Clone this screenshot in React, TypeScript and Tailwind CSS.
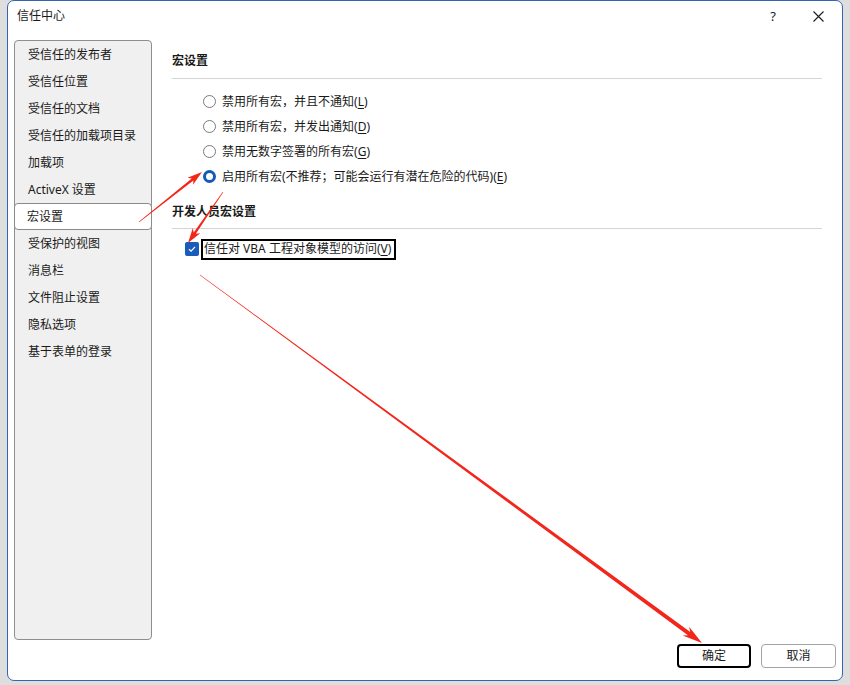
import React from "react";

const navItems = [
  "受信任的发布者",
  "受信任位置",
  "受信任的文档",
  "受信任的加载项目录",
  "加载项",
  "ActiveX 设置",
  "宏设置",
  "受保护的视图",
  "消息栏",
  "文件阻止设置",
  "隐私选项",
  "基于表单的登录",
];

const radios: { label: string; key: string; checked?: boolean }[] = [
  { label: "禁用所有宏，并且不通知", key: "L" },
  { label: "禁用所有宏，并发出通知", key: "D" },
  { label: "禁用无数字签署的所有宏", key: "G" },
  { label: "启用所有宏(不推荐；可能会运行有潜在危险的代码)", key: "E", checked: true },
];

type Pt = [number, number];

// tapered arrow: thin tail, thicker shaft near the head, triangular head
function arrowPoints(tail: Pt, tip: Pt, w0: number, w1: number, headLen: number, headW: number) {
  const dx = tip[0] - tail[0];
  const dy = tip[1] - tail[1];
  const len = Math.hypot(dx, dy);
  const ux = dx / len;
  const uy = dy / len;
  const nx = -uy;
  const ny = ux;
  const bx = tip[0] - ux * headLen;
  const by = tip[1] - uy * headLen;
  const cx = bx - ux * headLen * 0.25;
  const cy = by - uy * headLen * 0.25;
  const pts: Pt[] = [
    [tail[0] + (nx * w0) / 2, tail[1] + (ny * w0) / 2],
    [bx + (nx * w1) / 2, by + (ny * w1) / 2],
    [cx + (nx * headW) / 2, cy + (ny * headW) / 2],
    tip,
    [cx - (nx * headW) / 2, cy - (ny * headW) / 2],
    [bx - (nx * w1) / 2, by - (ny * w1) / 2],
    [tail[0] - (nx * w0) / 2, tail[1] - (ny * w0) / 2],
  ];
  return pts.map((p) => `${p[0].toFixed(1)},${p[1].toFixed(1)}`).join(" ");
}

function Radio({ checked }: { checked?: boolean }) {
  if (checked) {
    return (
      <span className="w-[13px] h-[13px] rounded-full border-[3.5px] border-[#1559b8] bg-white shrink-0" />
    );
  }
  return <span className="w-[13px] h-[13px] rounded-full border border-[#7a7a7a] bg-white shrink-0" />;
}

export default function App() {
  return (
    <div
      className="relative w-[850px] h-[685px] bg-[#dedede] overflow-hidden text-[12px] text-[#1a1a1a]"
      style={{ fontFamily: "'Noto Sans', 'Noto Sans CJK SC', sans-serif" }}
    >
      <div className="ml-[7px] w-[836px] h-[681px] bg-white border border-[#3466ad] rounded-[7px] flex flex-col">
        {/* title bar */}
        <div className="h-[30px] flex items-center pl-[9px] pr-[18px]">
          <span className="text-[12px] leading-[16px]">信任中心</span>
          <div className="ml-auto flex items-center gap-[37px]">
            <span className="text-[13px] leading-[16px]">?</span>
            <svg width="11" height="11" viewBox="0 0 11 11">
              <path d="M0.5 0.5 L10.5 10.5 M10.5 0.5 L0.5 10.5" stroke="#1a1a1a" strokeWidth="1.1" />
            </svg>
          </div>
        </div>

        {/* body */}
        <div className="mt-[9px] flex">
          <div className="ml-[6px] w-[138px] h-[600px] bg-[#f0f0f0] border border-[#8e8e8e] rounded-[4px] flex flex-col">
            {navItems.map((item) => {
              const active = item === "宏设置";
              return (
                <div
                  key={item}
                  className={
                    active
                      ? "h-[27px] flex items-center pl-[12px] bg-white border border-[#8a8a8a] rounded-[4px] -mx-px"
                      : "h-[27px] flex items-center pl-[13px]"
                  }
                >
                  <span className="leading-[16px]">{item}</span>
                </div>
              );
            })}
          </div>

          <div className="ml-[20px] w-[650px] flex flex-col">
            <div className="mt-[11px] h-[20px] flex items-center font-bold leading-[16px]">宏设置</div>
            <div className="mt-[7px] h-px bg-[#d4d4d4]" />

            <div className="mt-[10px] flex flex-col pl-[31px]">
              {radios.map((r) => (
                <div key={r.key} className="h-[25px] flex items-center gap-[6px]">
                  <Radio checked={r.checked} />
                  <span className="leading-[16px]">
                    {r.label}(<span className="underline underline-offset-2">{r.key}</span>)
                  </span>
                </div>
              ))}
            </div>

            <div className="mt-[13px] h-[20px] flex items-center font-bold leading-[16px]">开发人员宏设置</div>
            <div className="mt-[6px] h-px bg-[#d4d4d4]" />

            <div className="mt-[9px] h-[22px] flex items-center pl-[13px]">
              <span className="w-[14px] h-[14px] rounded-[2px] bg-[#1a5cb9] flex items-center justify-center shrink-0">
                <svg width="10" height="10" viewBox="0 0 10 10">
                  <path d="M2 5.2 L4.1 7.2 L8 2.9" fill="none" stroke="white" strokeWidth="1.2" />
                </svg>
              </span>
              <span className="ml-[2px] h-[21px] pl-[1px] pr-[3px] border-2 border-black flex items-center">
                <span className="leading-[16px]">
                  信任对 VBA 工程对象模型的访问(<span className="underline underline-offset-2">V</span>)
                </span>
              </span>
            </div>
          </div>
        </div>

        {/* footer */}
        <div className="mt-[4px] flex justify-end gap-[10px] pr-[6px]">
          <button className="w-[74px] h-[24px] border-2 border-black rounded-[4px] bg-white flex items-center justify-center leading-[16px]">
            确定
          </button>
          <button className="w-[75px] h-[24px] border border-[#a3a3a3] rounded-[4px] bg-white flex items-center justify-center leading-[16px]">
            取消
          </button>
        </div>
      </div>

      {/* annotation arrows */}
      <svg className="absolute inset-0 pointer-events-none" width="850" height="685" viewBox="0 0 850 685">
        <polygon points={arrowPoints([139, 222], [202, 172], 0.6, 2.6, 12, 9)} fill="#f3261c" />
        <polygon points={arrowPoints([223, 192], [188, 243], 0.6, 2.6, 12, 9)} fill="#f3261c" />
        <polygon points={arrowPoints([200, 275], [702, 643], 0.4, 4, 16, 11)} fill="#f3261c" />
      </svg>
    </div>
  );
}
